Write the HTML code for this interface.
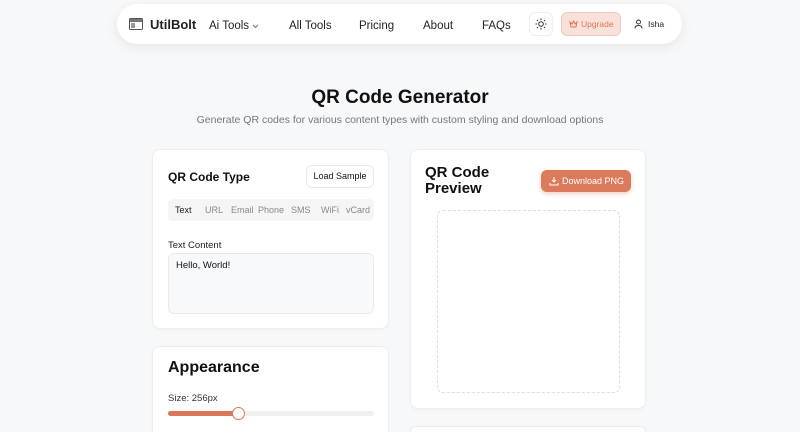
<!DOCTYPE html>
<html><head><meta charset="utf-8"><style>
*{box-sizing:border-box;margin:0;padding:0}
html,body{width:800px;height:432px;overflow:hidden}
body{background:#f7f8fa;font-family:"Liberation Sans",sans-serif;color:#111;position:relative}
.nav{position:absolute;left:117px;top:4px;width:565px;height:40px;background:#fff;border-radius:20px;box-shadow:0 3px 12px rgba(0,0,0,.08)}
.nav span{position:absolute;top:16px;font-size:11.5px;line-height:13px;color:#222;white-space:nowrap}
.card{position:absolute;background:#fff;border:1px solid #eceef1;border-radius:8px;box-shadow:0 1px 3px rgba(0,0,0,.03)}
.abs{position:absolute;white-space:nowrap}
</style></head><body>
<div class="nav">
 <svg class="abs" style="left:12px;top:14px" width="14" height="12" viewBox="0 0 14 12"><rect x="0.5" y="0.5" width="13" height="11" rx="1" fill="none" stroke="#555"/><rect x="1" y="1" width="12" height="3" fill="#777"/><rect x="2" y="5" width="4" height="5" fill="#999"/></svg>
 <span style="left:33px;font-weight:bold;font-size:13px;top:13px;line-height:15px">UtilBolt</span>
 <span style="left:92px">Ai Tools</span>
 <svg class="abs" style="left:135px;top:20px" width="7" height="5" viewBox="0 0 7 5"><path d="M1 1l2.5 2.5L6 1" fill="none" stroke="#777"/></svg>
 <span style="left:172px">All Tools</span>
 <span style="left:242px">Pricing</span>
 <span style="left:306px">About</span>
 <span style="left:365px">FAQs</span>
 <div class="abs" style="left:412px;top:8px;width:24px;height:24px;border:1px solid #eee;border-radius:6px"></div>
 <svg class="abs" style="left:418px;top:14px" width="12" height="12" viewBox="0 0 12 12"><circle cx="6" cy="6" r="2.3" fill="none" stroke="#333"/><path d="M6 0.5v1.5M6 10v1.5M0.5 6h1.5M10 6h1.5M2 2l1 1M9 9l1 1M2 10l1-1M9 3l1-1" stroke="#333"/></svg>
 <div class="abs" style="left:444px;top:8px;width:60px;height:24px;background:#f9e1da;border:1px solid #f1cbbf;border-radius:6px"></div>
 <svg class="abs" style="left:452px;top:16px" width="9" height="8" viewBox="0 0 9 8"><path d="M1 2l2 2 1.5-3 1.5 3 2-2-1 5H2z" fill="none" stroke="#d9775a"/></svg>
 <span style="left:464px;top:15px;font-size:8.5px;line-height:10px;color:#d9775a">Upgrade</span>
 <svg class="abs" style="left:517px;top:15px" width="9" height="10" viewBox="0 0 9 10"><circle cx="4.5" cy="3" r="2" fill="none" stroke="#333"/><path d="M1 9.5c0-2 1.5-3 3.5-3s3.5 1 3.5 3" fill="none" stroke="#333"/></svg>
 <span style="left:531px;top:15px;font-size:8.5px;line-height:10px">Isha</span>
</div>
<div class="abs" style="left:0;width:800px;top:87px;text-align:center;font-size:19px;font-weight:bold">QR Code Generator</div>
<div class="abs" style="left:0;width:800px;top:114px;text-align:center;font-size:10.5px;color:#777">Generate QR codes for various content types with custom styling and download options</div>

<div class="card" style="left:152px;top:149px;width:237px;height:180px">
 <div class="abs" style="left:15px;top:20px;font-size:12px;font-weight:bold">QR Code Type</div>
 <div class="abs" style="left:153px;top:15px;width:68px;height:23px;border:1px solid #e8eaed;border-radius:6px;font-size:9px;line-height:21px;text-align:center">Load Sample</div>
 <div class="abs" style="left:15px;top:49px;width:206px;height:22px;background:#f4f5f7;border-radius:5px;font-size:9px;color:#888">
  <span class="abs" style="left:7px;top:6px;color:#222">Text</span><span class="abs" style="left:37px;top:6px">URL</span><span class="abs" style="left:63px;top:6px">Email</span><span class="abs" style="left:90px;top:6px">Phone</span><span class="abs" style="left:123px;top:6px">SMS</span><span class="abs" style="left:153px;top:6px">WiFi</span><span class="abs" style="left:178px;top:6px">vCard</span>
 </div>
 <div class="abs" style="left:15px;top:90px;font-size:9.5px;color:#222">Text Content</div>
 <div class="abs" style="left:15px;top:103px;width:206px;height:61px;background:#f8f9fb;border:1px solid #e8eaed;border-radius:6px;font-size:9.5px;padding:6px 7px">Hello, World!</div>
</div>

<div class="card" style="left:152px;top:346px;width:237px;height:86px;border-bottom-left-radius:0;border-bottom-right-radius:0;border-bottom:none">
 <div class="abs" style="left:15px;top:12px;font-size:16px;font-weight:bold">Appearance</div>
 <div class="abs" style="left:15px;top:46px;font-size:9.5px;color:#333">Size: 256px</div>
 <div class="abs" style="left:15px;top:64px;width:206px;height:5px;background:#f0f0f0;border-radius:3px"></div>
 <div class="abs" style="left:15px;top:64px;width:70px;height:5px;background:#d9775a;border-radius:3px"></div>
 <div class="abs" style="left:79px;top:60px;width:13px;height:13px;background:#fff;border:1.5px solid #d9775a;border-radius:50%"></div>
</div>

<div class="card" style="left:410px;top:149px;width:236px;height:260px">
 <div class="abs" style="left:14px;top:15px;font-size:15px;font-weight:bold;line-height:16px">QR Code<br>Preview</div>
 <div class="abs" style="left:130px;top:20px;width:90px;height:22px;background:#dc7a5c;border-radius:6px;box-shadow:0 2px 5px rgba(220,122,92,.35);color:#fff;font-size:9px;line-height:22px;padding-left:21px">Download PNG</div>
 <svg class="abs" style="left:138px;top:26px" width="10" height="10" viewBox="0 0 10 10"><path d="M5 1v5M3 4l2 2 2-2M1 7v2h8V7" fill="none" stroke="#fff"/></svg>
 <div class="abs" style="left:26px;top:60px;width:183px;height:183px;border:1px dashed #ddd;border-radius:6px"></div>
</div>
<div class="card" style="left:410px;top:426px;width:236px;height:6px;border-bottom:none;border-bottom-left-radius:0;border-bottom-right-radius:0"></div>
</body></html>
